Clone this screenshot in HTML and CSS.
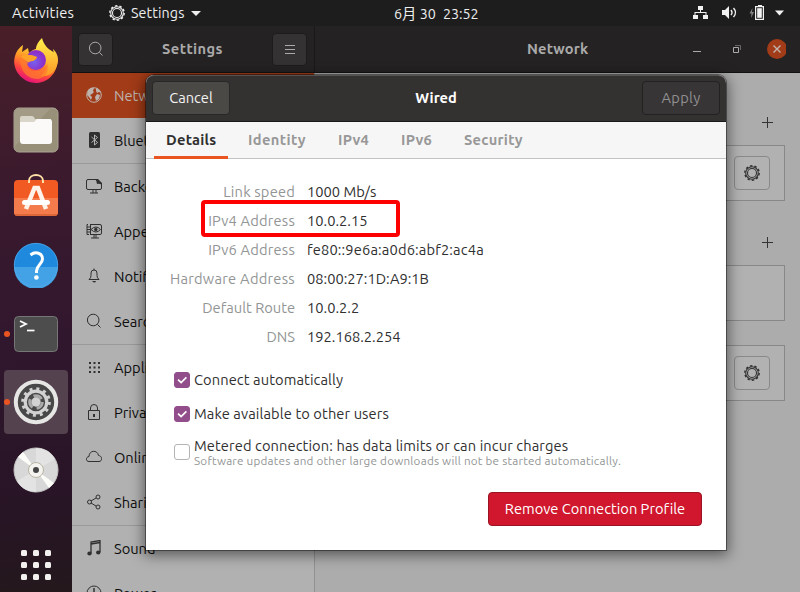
FILE: index.html
```
<!DOCTYPE html>
<html lang="en">
<head>
<meta charset="utf-8">
<title>Settings</title>
<link rel="stylesheet" href="styles.css">
</head>
<body>
<svg class="defs" aria-hidden="true">
  <symbol id="gear" viewBox="0 0 16 16"><g fill="none" stroke="currentColor"><circle cx="8" cy="8" r="6.3" stroke-width="1.1"/><circle cx="8" cy="8" r="7.2" stroke-width="1.4" stroke-dasharray="2.400 2.124"/><circle cx="8" cy="8" r="4.500" stroke-width="1.1"/></g></symbol>
  <symbol id="search" viewBox="0 0 16 16"><g fill="none" stroke="currentColor" stroke-width="1"><circle cx="7.200" cy="7" r="5.800"/><path d="M11.4 11.4 14.500 14.500"/></g></symbol>
</svg>
<header class="topbar">
  <span class="activities">Activities</span>
  <svg class="top-gear"><use href="#gear"/></svg>
  <span class="appname">Settings</span>
  <i class="arrow"></i>
  <time class="clock">6月 30&ensp;23:52</time>
  <svg class="tray" width="114" height="16" viewBox="0 0 114 16">
    <g fill="#f2f2f2">
      <path d="M5 1h5v4H8v2h5.500v3H15v4h-5v-4h2.500V8h-10v2H5v4H0v-4h1.500V7H7V5H5z"/>
      <path d="M29 5h3l4-4v13l-4-4h-3z"/>
      <path d="M38 5q2 2.500 0 5M40.500 3q4 4.500 0 9" fill="none" stroke="#f2f2f2" stroke-width="1.400"/>
      <path d="M59.500 3 56.500 8.500h2L58 13l3-6h-2z" fill="#858585"/>
      <path d="M65 0h4v1h2v14h-9V1h3z"/><path d="M63.200 2.200h6.600v11.600h-6.600z" fill="#1d1d1d"/><path d="M64.200 3.200h4.600v9.600h-4.600z"/>
      <path d="M82 5.500h9l-4.500 5z"/>
    </g>
  </svg>
</header>
<div class="desktop">
  <nav class="dock">
    <a class="tile"><svg width="46" height="48" viewBox="0 0 46 48">
      <defs>
        <linearGradient id="fx" x1=".75" y1=".1" x2=".35" y2="1"><stop offset="0" stop-color="#ffe13b"/><stop offset=".4" stop-color="#ff9a26"/><stop offset=".7" stop-color="#ff443f"/><stop offset="1" stop-color="#e3107e"/></linearGradient>
        <linearGradient id="fy" x1="0" y1="0" x2="0" y2="1"><stop offset="0" stop-color="#fff04c"/><stop offset="1" stop-color="#ff9725"/></linearGradient>
        <radialGradient id="fp" cx=".4" cy=".6"><stop offset="0" stop-color="#7562ee"/><stop offset="1" stop-color="#8d2fc9"/></radialGradient>
      </defs>
      <path d="M10 9 9 16l6-4 1 5C24 9 38 11 44 20c3 14-8 27-21 27C9 47-2 33 2 20q2-7 8-11Z" fill="url(#fx)"/>
      <path d="M29 2c-7 7-8 13-3 18 8 5 10 13 2 20 10 2 17-8 17-16 0-6-3-9-5-11l1 5C36 13 31 10 29 2Z" fill="url(#fy)"/>
      <circle cx="23" cy="24" r="10" fill="url(#fp)"/>
      <path d="M7 19q8-1 17 2c-1 4-5 3-8 5-4 3-1 9 7 9 7 0 11-4 11-9q3 15-9 17C12 43 6 32 7 19Z" fill="#ff7c2c" opacity=".75"/>
      <path d="M7 20q9-3 17 1c-1 4-5 4-9 5Z" fill="#ffa328"/>
    </svg></a>
    <a class="tile"><svg width="46" height="46" viewBox="0 0 46 46">
      <rect x="1" y="1" width="44" height="44" rx="5" fill="#989079" stroke="#aaa594"/><path d="M2 39V6q0-4 4-4h31Z" fill="#aaa48f" opacity=".6"/>
      <path d="M7 11q0-2 2-2h10q2 0 3 3h16v7H7Z" fill="#d9d6c9"/><path d="M7 15h14l3-3h12q3 0 3 3v19q0 3-3 3H10q-3 0-3-3Z" fill="#fbfaf9"/>
    </svg></a>
    <a class="tile store"><svg width="46" height="46" viewBox="0 0 46 46">
      <rect x="1" y="7" width="44" height="36" rx="4" fill="#f25a24"/><path d="M1 25h44v14q0 4-4 4H5q-4 0-4-4Z" fill="#f47b4b"/><path d="M2 42h42" stroke="#c75429"/>
      <path d="M16 10V8c0-8 14-8 14 0v2" fill="none" stroke="#ffe0a6" stroke-width="2"/>
      <path d="m13 36 8.500-21h3.500l8 21" fill="none" stroke="#fff2e9" stroke-width="4.500"/><rect x="9" y="27" width="28" height="5" rx="2.500" fill="#fff"/>
    </svg></a>
    <a class="tile help"><svg width="46" height="46" viewBox="0 0 46 46">
      <circle cx="23" cy="23" r="22" fill="#1f8add"/><path d="M1 25h44a22 22 0 0 1-44 0Z" fill="#43a2e5"/><circle cx="23" cy="23" r="21.700" fill="none" stroke="#55aceb" stroke-width=".7"/>
      <path d="M17.500 13c5-4 12-2 12 4 0 5-6 6-6 12v2" fill="none" stroke="#fff" stroke-width="3"/><circle cx="23.400" cy="35.500" r="2.300" fill="#fff"/>
    </svg></a>
    <a class="tile running"><svg width="46" height="46" viewBox="0 0 46 46">
      <rect x="1.500" y="5.500" width="43" height="35" rx="4" fill="#4d4d4d" stroke="#777"/><path d="m7 10 6 3-6 3" fill="none" stroke="#fff" stroke-width="1.800"/><path d="M14 19.500h7.500" stroke="#fff" stroke-width="1.700"/>
    </svg></a>
    <a class="tile running active"><svg width="46" height="46" viewBox="0 0 46 46">
      <circle cx="23" cy="23" r="20.200" fill="#484848" stroke="#e6e6e5" stroke-width="4"/>
      <circle cx="23" cy="23" r="10.800" fill="none" stroke="#d2d2d2" stroke-width="3.200"/><circle cx="23" cy="23" r="13.300" fill="none" stroke="#d2d2d2" stroke-width="3" stroke-dasharray="3 3.963"/>
      <circle cx="23" cy="23" r="6.300" fill="none" stroke="#aaa" stroke-width="3" stroke-dasharray="9 4.190"/><circle cx="23" cy="23" r="4.700" fill="#d2d2d2"/>
    </svg></a>
    <a class="tile"><svg width="46" height="46" viewBox="0 0 46 46">
      <circle cx="23" cy="23" r="22" fill="#d8d8d8" stroke="#c4c4c4"/><path d="M23 23V1a22 22 0 0 1 19 11ZM23 23v22A22 22 0 0 1 4 34Z" fill="#e3e3e3"/>
      <path d="M23 23 5 10l5-5ZM23 23l18 13-5 5Z" fill="#fcfcf9"/><circle cx="23" cy="23" r="7.500" fill="#f4f3ef" stroke="#b9b5a5"/><circle cx="23" cy="23" r="3" fill="#454545"/>
    </svg></a>
    <span class="apps"><i></i><i></i><i></i><i></i><i></i><i></i><i></i><i></i><i></i></span>
  </nav>
  <main class="window">
    <header class="titlebar">
      <div class="side-title"><button class="hb"><svg width="16" height="16"><use href="#search"/></svg></button><b class="t-settings">Settings</b><button class="hb"><svg width="16" height="16"><path d="M3 4.500h10M3 8.500h10M3 12.500h10" stroke="#aaa"/></svg></button></div>
      <div class="main-title"><b class="t-network">Network</b>
        <svg class="controls" width="98" height="22" viewBox="0 0 98 22"><path d="M5 13.500h8" stroke="#aaa"/><path d="M45.500 9.500h5v5h-5z" fill="none" stroke="#aaa"/><path d="M47 7.500h5.500V12" fill="none" stroke="#666"/><circle cx="89" cy="11" r="10" fill="#a23b17"/><path d="m85.500 7.500 7 7m0-7-7 7" stroke="#c1b4ad" stroke-width="1.400"/></svg>
      </div>
    </header>
    <div class="body">
      <aside class="sidebar">
        <div class="row selected"><svg viewBox="0 0 16 16"><circle cx="8" cy="8" r="7.300" fill="none" stroke="currentColor"/><path d="M2 3q3-3 6-2l-1 3 1 1-2 2-2 1 2 2-1 3-2-3-2-2ZM10 1q4 1 5 5l-2-1-2 1-1-2Zm1 6 3 1-1 4-3 2-1-4Z" fill="currentColor"/></svg><span>Network</span></div>
        <div class="row"><svg viewBox="0 0 16 16"><rect x="3" width="11" height="16" rx="1.500" fill="#303030"/><path d="m5.500 5 6 5.500-3 2.500V3l3 2.500-6 5" fill="none" stroke="#b5b5b5"/></svg><span>Bluetooth</span></div>
        <div class="row first"><svg viewBox="0 0 16 16"><path d="M10 1.500H2q-1.500 0-1.500 1.500v7q0 1.500 1.500 1.500h12q1.500 0 1.500-1.500V6M7 12v3m3-3v3M4 15h8" fill="none" stroke="currentColor"/><path d="M9 1h3l4 4v2q-3-2-5-1 0-3-2-5Z" fill="currentColor"/></svg><span>Background</span></div>
        <div class="row"><svg viewBox="0 0 16 16"><path d="M4 1.500h10q1.500 0 1.500 1.500v7q0 1.500-1.500 1.500H4.500M4.500 1v11M2 1.500h-1v10h2M1 4h3M1 6.500h3M1 9h3M8 12v3m2-3v3m-5 0h8" fill="none" stroke="currentColor"/><path d="M5 6.500q5-5 9.500 0-4.500 5-9.500 0Z" fill="none" stroke="currentColor"/><circle cx="9.800" cy="6.500" r="1.700" fill="currentColor"/></svg><span>Appearance</span></div>
        <div class="row"><svg viewBox="0 0 16 16"><path d="M3 11.500q2-1.500 2-4V5q0-3 3-3t3 3v2.500q0 2.500 2 4ZM8 2V.5" fill="none" stroke="currentColor"/><path d="M6 13h4q-1 3-4 0Z" fill="currentColor"/></svg><span>Notifications</span></div>
        <div class="row"><svg viewBox="0 0 16 16"><use href="#search"/></svg><span>Search</span></div>
        <div class="row first"><svg viewBox="0 0 16 16"><path d="M4 3v12M8.500 3v12M13 3v12" stroke="currentColor" stroke-width="2" stroke-dasharray="2 2.500"/></svg><span>Applications</span></div>
        <div class="row"><svg viewBox="0 0 16 16"><path d="M2.500 6.500h11v9h-11zM4.500 6V4q0-3.500 3.500-3.500T11.500 4v2" fill="none" stroke="currentColor"/><path d="M7 10h2v3H7z" fill="currentColor"/></svg><span>Privacy</span></div>
        <div class="row"><svg viewBox="0 0 16 16"><path d="M3 12.500C-.5 12.500-.5 8 3 7.500 3 1 11.500.5 12.500 6.500c4.200.5 4 6 .5 6Z" fill="none" stroke="currentColor"/></svg><span>Online Accounts</span></div>
        <div class="row"><svg viewBox="0 0 16 16"><g fill="none" stroke="currentColor"><path d="m5 7 5-3M5 9l5 3"/><circle cx="3.500" cy="8" r="2"/><circle cx="12" cy="3" r="2"/><circle cx="12" cy="13" r="2"/></g></svg><span>Sharing</span></div>
        <div class="row first"><svg viewBox="0 0 16 16"><path d="M5 13V2l9-1.500V12M5 4l9-1.500" fill="none" stroke="currentColor" stroke-width="1.300"/><ellipse cx="3.500" cy="13.500" rx="2.200" ry="2" fill="currentColor"/><ellipse cx="12.300" cy="12.500" rx="2.200" ry="2" fill="currentColor"/></svg><span>Sound</span></div>
        <div class="row"><svg viewBox="0 0 16 16"><circle cx="8" cy="8" r="7" fill="none" stroke="currentColor"/><path d="M8 3v6" stroke="currentColor" stroke-width="1.500"/></svg><span>Power</span></div>
      </aside>
      <section class="panel">
        <div class="plus"></div>
        <div class="card"><button><svg><use href="#gear"/></svg></button></div>
        <div class="plus second"></div>
        <div class="card"></div>
        <div class="card last"><button><svg><use href="#gear"/></svg></button></div>
      </section>
    </div>
  </main>
</div>
<section class="dialog">
  <header class="dialog-head"><button class="cancel">Cancel</button><b>Wired</b><button class="apply">Apply</button></header>
  <nav class="tabs"><b class="on">Details</b><b class="identity">Identity</b><b class="ip">IPv4</b><b class="ip">IPv6</b><b class="security">Security</b></nav>
  <dl class="facts">
    <dt>Link speed</dt><dd>1000 Mb/s</dd>
    <dt>IPv4 Address</dt><dd>10.0.2.15</dd>
    <dt>IPv6 Address</dt><dd class="ipv6">fe80::9e6a:a0d6:abf2:ac4a</dd>
    <dt class="hardware">Hardware Address</dt><dd>08:00:27:1D:A9:1B</dd>
    <dt class="plain">Default Route</dt><dd>10.0.2.2</dd>
    <dt class="plain">DNS</dt><dd>192.168.2.254</dd>
  </dl>
  <div class="options">
    <label><i class="check on"><svg viewBox="0 0 16 16"><path d="m3.500 7.500 3.500 3.500 6-6" /></svg></i><span>Connect automatically</span></label>
    <label><i class="check on"><svg viewBox="0 0 16 16"><path d="m3.500 7.500 3.500 3.500 6-6" /></svg></i><span>Make available to other users</span></label>
    <label class="metered"><i class="check"></i><span class="lines"><span>Metered connection: has data limits or can incur charges</span><small>Software updates and other large downloads will not be started automatically.</small></span></label>
  </div>
  <button class="remove">Remove Connection Profile</button>
  <div class="highlight"></div>
</section>
</body>
</html>
```
FILE: styles.css
```
* { box-sizing: border-box; }
body { margin: 0; width: 800px; height: 592px; overflow: hidden; position: relative; font: 14.67px/20px Ubuntu, "Noto Sans", "Noto Sans CJK SC", sans-serif; font-variant-ligatures: none; color: #303030; }
button { font: inherit; font-variant-ligatures: none; padding: 0; border: 1px solid; border-radius: 4px; white-space: nowrap; }
svg { display: block; flex: none; }
.defs { position: absolute; width: 0; height: 0; }
.topbar { height: 26px; background: #1d1d1d; color: #eee; display: flex; align-items: center; padding-left: 12px; white-space: nowrap; }
.activities { width: 97px; letter-spacing: .2px; }
.top-gear { width: 16px; height: 16px; margin-right: 6px; }
.appname { width: 60px; font-size: 14.3px; letter-spacing: .1px; }
.arrow { border: 5px solid transparent; border-top-color: #eee; border-bottom: 0; }
.clock { margin-left: 193px; width: 86px; font-size: 14.3px; padding-top: 1px; }
.tray { margin-left: auto; margin-right: -7px; }
.desktop { display: flex; height: 566px; }
.dock { width: 72px; background: linear-gradient(175deg, #491f28 0, #3b1a2e 28%, #31172e 55%, #271425 85%, #24181c 100%); padding-top: 4px; display: flex; flex-direction: column; gap: 4px; align-items: center; }
.tile { width: 64px; height: 64px; flex: none; border-radius: 4px; display: flex; align-items: center; justify-content: center; position: relative; }
.tile:first-child svg { margin-top: -4px; }
.store svg { margin-top: -4px; }
.help svg { margin-top: -2px; }
.tile.active { background: #54424f; }
.tile.running::before { content: ""; position: absolute; left: 0; top: 29px; width: 6px; height: 6px; border-radius: 50%; background: #e95420; }
.apps { display: grid; grid-template-columns: repeat(3, 6px); gap: 6px; margin-top: 44px; }
.apps i { height: 6px; background: #f3f1ef; border-radius: 1.500px; }
.window { flex: 1; display: flex; flex-direction: column; background: #acacac; }
.titlebar { height: 47px; flex: none; background: #242222; border-bottom: 1px solid #121212; display: flex; color: #aaa; }
.side-title { width: 243px; border-right: 1px solid #1a1919; display: flex; align-items: center; justify-content: space-between; padding: 0 7px 0 6px; }
.t-settings { letter-spacing: .4px; }
.t-network { letter-spacing: .15px; }
.hb { width: 35px; height: 33px; background: #343232; border-color: #1d1b1b; color: #aaa; display: flex; align-items: center; justify-content: center; }
.main-title { flex: 1; display: flex; align-items: center; padding-left: 212px; }
.controls { margin-left: auto; margin-right: 14px; }
.body { flex: 1; display: flex; min-height: 0; }
.sidebar { width: 243px; background: #b1b1b1; border-right: 1px solid #919191; color: #0d0d0d; overflow: hidden; }
.row { height: 45px; display: flex; align-items: center; gap: 12px; padding-left: 14px; padding-top: 1px; }
.row svg { width: 16px; height: 16px; color: #303030; margin-bottom: 2px; }
.row.first { height: 46px; border-top: 1px solid #999; }
.row.selected { background: #a23b17; color: #bdb2ac; }
.row.selected svg { color: #bdb2ac; }
.panel { flex: 1; display: flex; flex-direction: column; padding-top: 44px; }
.plus { width: 11px; height: 11px; margin-left: 447px; background: linear-gradient(#333,#333) 50%/1px 11px no-repeat, linear-gradient(#333,#333) 50%/11px 1px no-repeat; margin-bottom: 17px; }
.plus.second { margin-top: 36px; }
.card { width: 440px; height: 56px; margin-left: 30px; border: 1px solid #888; background: #b1b1b1; display: flex; justify-content: flex-end; align-items: center; padding-right: 14px; }
.card.last { margin-top: 24px; }
.card button { width: 36px; height: 34px; background: #b2b2b2; border-color: #898989; color: #303030; display: flex; align-items: center; justify-content: center; }
.card svg { width: 16px; height: 16px; }
.dialog { position: absolute; left: 146px; top: 75px; width: 580px; height: 475px; background: #fff; border-radius: 8px 8px 0 0; box-shadow: 0 0 0 1px rgba(0,0,0,.4), 0 3px 14px 2px rgba(0,0,0,.5); display: flex; flex-direction: column; }
.dialog-head { height: 47px; background: #343131; border-top: 1px solid #555252; border-bottom: 1px solid #1a1919; border-radius: 8px 8px 0 0; display: flex; align-items: center; justify-content: space-between; padding: 0 6px 1px; color: #fff; }
.cancel { width: 78px; height: 34px; background: #4b4946; border-color: #292727; color: #f3f3f3; }
.apply { width: 78px; height: 34px; background: #383536; border-color: #232122; color: #929191; letter-spacing: .3px; }
.tabs { height: 37px; background: #f6f6f6; border-bottom: 1px solid #c3c3c3; display: flex; padding-left: 8px; color: #989898; line-height: 36px; letter-spacing: .25px; }
.tabs b { padding-left: 12px; height: 37px; white-space: nowrap; }
.tabs .on { width: 74px; margin-right: 8px; border-bottom: 3px solid #e95420; color: #303030; }
.tabs .identity { width: 90px; letter-spacing: .4px; }
.tabs .ip { width: 63px; }
.facts { margin: 18px 0 0; display: grid; grid-template-columns: 149px 1fr; column-gap: 12px; grid-auto-rows: 29px; line-height: 29px; white-space: nowrap; }
.facts dt { text-align: right; color: #929595; letter-spacing: .2px; }
.facts .hardware { letter-spacing: .27px; }
.facts .plain { letter-spacing: 0; }
.facts dd { margin: 0; }
.facts .ipv6 { letter-spacing: .15px; }
.options { margin: 12px 0 0 28px; white-space: nowrap; letter-spacing: .1px; }
.options label { display: flex; align-items: center; gap: 4px; height: 34px; }
.check { width: 16px; height: 16px; border-radius: 3px; border: 1px solid #b4b4b4; }
.check.on { background: #924d8b; border-color: #924d8b; }
.check svg { width: 14px; height: 14px; fill: none; stroke: #fff; stroke-width: 2; }
.options .metered { height: 42px; }
.lines { display: flex; flex-direction: column; line-height: 17px; }
small { font-size: 11.67px; line-height: 13px; color: #929595; letter-spacing: .23px; }
.remove { width: 214px; height: 34px; margin: 19px 24px 0 auto; background: #d0172d; border-color: #9b1424; color: #fff; }
.highlight { position: absolute; left: 55px; top: 125px; width: 199px; height: 37px; border: 4px solid #f00; border-radius: 4px; }
```
